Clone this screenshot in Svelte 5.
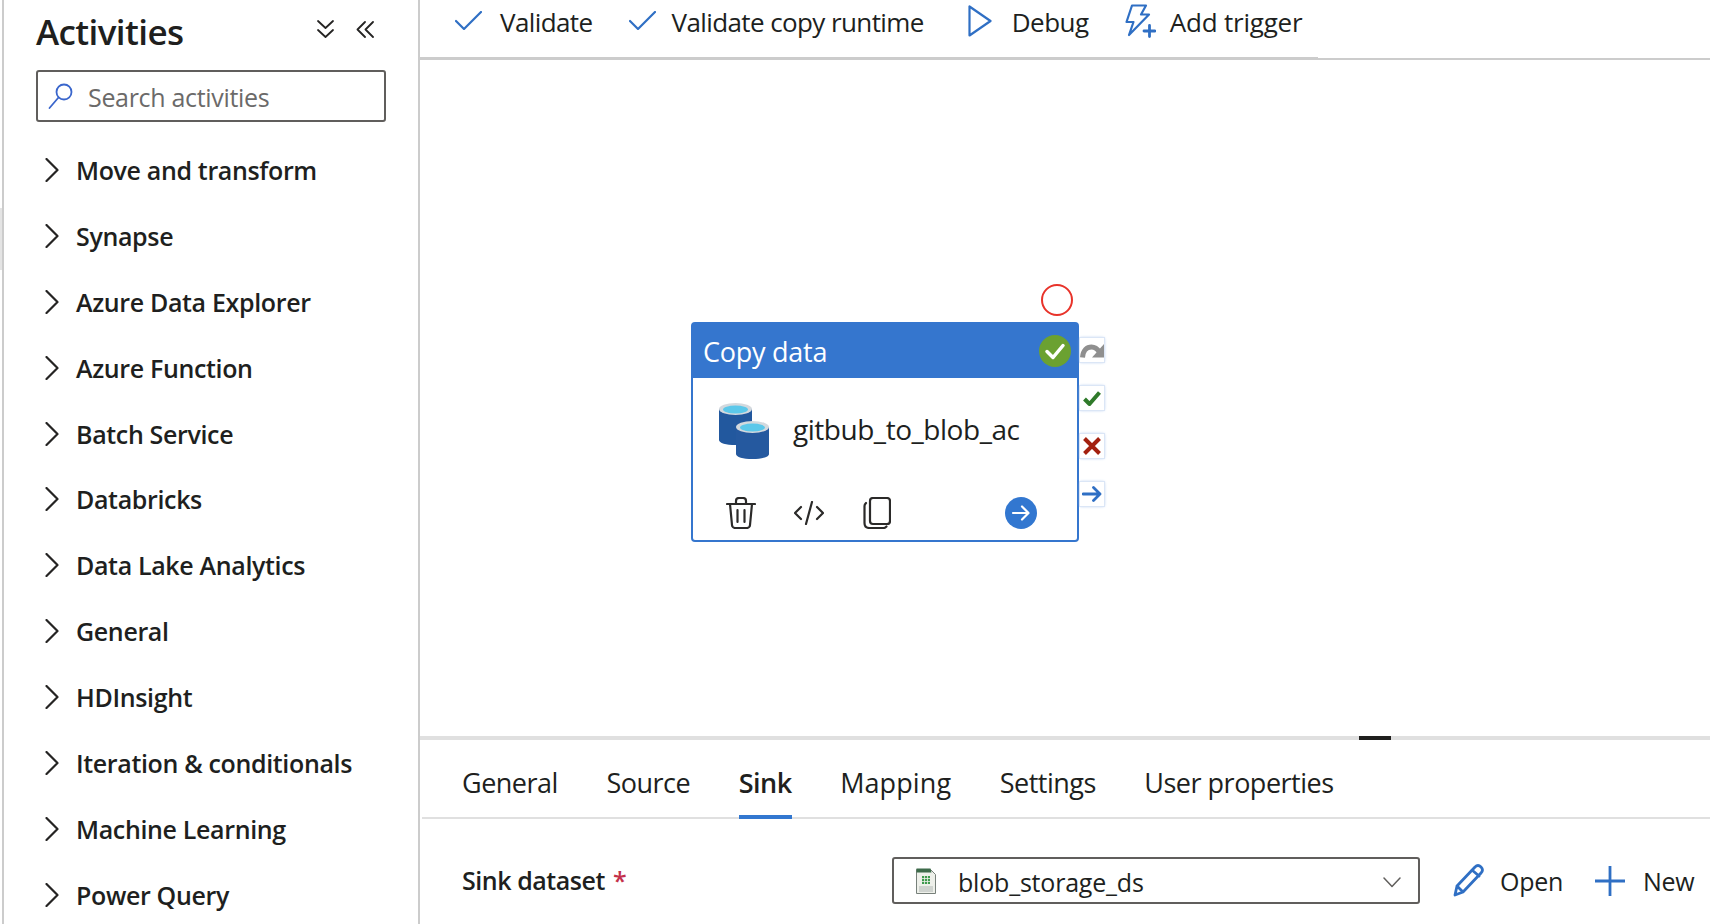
<script>
  const groups = ['Move and transform','Synapse','Azure Data Explorer','Azure Function','Batch Service','Databricks','Data Lake Analytics','General','HDInsight','Iteration & conditionals','Machine Learning','Power Query'];
  const tabs = ['General','Source','Sink','Mapping','Settings','User properties'];
</script>

<div class="page">
  <div class="gutter"><div class="gutter-mark"></div></div>
  <aside class="sidebar">
    <div class="side-head">
      <h1>Activities</h1>
      <div class="head-icons">
        <svg width="17" height="18" viewBox="0 0 17 18"><path d="M1 1l7.500 7 7.500-7M1 10l7.500 7 7.500-7" class="ln dark"/></svg>
        <svg width="18" height="17" viewBox="0 0 18 17"><path d="M9 1L1.500 8.500 9 16M17 1L9.500 8.500 17 16" class="ln dark"/></svg>
      </div>
    </div>
    <div class="search">
      <svg width="26" height="27" viewBox="0 0 26 27"><circle cx="16" cy="9" r="7.500" class="ln blue"/><path d="M10.500 14.500L1.500 25" class="ln blue"/></svg>
      <span>Search activities</span>
    </div>
    <ul class="groups">
      {#each groups as g}
        <li>
          <svg width="14" height="24" viewBox="0 0 14 24"><path d="M1.500 1l11 11-11 11" class="ln dark w2"/></svg>
          <span>{g}</span>
        </li>
      {/each}
    </ul>
  </aside>
  <main class="main">
    <div class="toolbar">
      <div class="tools">
        <div class="tool t1">
          <svg class="chk" width="27" height="19" viewBox="0 0 27 19"><path d="M1 10l8 8L26 1" class="ln blue2 w2"/></svg>
          <span>Validate</span>
        </div>
        <div class="tool t2">
          <svg class="chk" width="27" height="19" viewBox="0 0 27 19"><path d="M1 10l8 8L26 1" class="ln blue2 w2"/></svg>
          <span>Validate copy runtime</span>
        </div>
        <div class="tool t3">
          <svg class="play" width="24" height="32" viewBox="0 0 24 32"><path d="M1.500 1.500v29L22.500 16z" class="ln blue2 w2"/></svg>
          <span>Debug</span>
        </div>
        <div class="tool t4">
          <svg class="bolt" width="31" height="34" viewBox="0 0 31 34"><path d="M7 1.500h14L16 10.500h8L4 31l4.500-13H1.500z" class="ln blue2 w2"/><path d="M19 27h11M24.500 21.500v11" class="ln blue2 w25"/></svg>
          <span>Add trigger</span>
        </div>
      </div>
    </div>
    <section class="canvas">
      <div class="ring"></div>
      <div class="node">
        <div class="node-head">
          <span>Copy data</span>
          <svg width="32" height="32" viewBox="0 0 32 32"><circle cx="16" cy="16" r="16" fill="#6ba131"/><path d="M8 16.500l6 6 10-12" class="ln white w3"/></svg>
        </div>
        <div class="node-body">
          <svg width="51" height="56" viewBox="0 0 51 56">
            <path d="M0 6v31c0 3 7 5 16.500 5S33 40 33 37V6z" fill="#22589e"/>
            <ellipse cx="16.500" cy="6" rx="16.500" ry="6" fill="#d3d9de"/>
            <ellipse cx="16.500" cy="6.500" rx="12.500" ry="4" fill="#5cc8ea"/>
            <path d="M17 24v27c0 3 7 5 16.500 5S50 54 50 51V24z" fill="#25599f"/>
            <ellipse cx="33.500" cy="24" rx="16.500" ry="6" fill="#d3d9de"/>
            <ellipse cx="33.500" cy="24.500" rx="12.500" ry="4" fill="#5cc8ea"/>
          </svg>
          <span>gitbub_to_blob_ac</span>
        </div>
        <div class="node-foot">
          <svg class="trash" width="30" height="32" viewBox="0 0 30 32"><path d="M1 7h28M10 7V4c0-2 1-3 3-3h4c2 0 3 1 3 3v3M4 7l2 21c0 2 2 3 3 3h12c1 0 3-1 3-3l2-21M11.500 13v12M18.500 13v12" class="ln dark2 w2"/></svg>
          <svg class="code" width="30" height="24" viewBox="0 0 30 24"><path d="M7 6L1 12l6 6M23 6l6 6-6 6M18 1l-6 22" class="ln dark2 w2"/></svg>
          <svg class="dup" width="28" height="32" viewBox="0 0 28 32"><rect x="7" y="1" width="20" height="26" rx="3" class="ln dark2 w2"/><path d="M3 6C2 7 1.500 8 1.500 9v17c0 3 2 5 5 5h14c1 0 2-.5 3-1.500" class="ln dark2 w2"/></svg>
          <svg class="go" width="32" height="32" viewBox="0 0 32 32"><circle cx="16" cy="16" r="16" fill="#3277d0"/><path d="M8 16h15M17 9.500l6.500 6.500-6.500 6.500" class="ln white w2"/></svg>
        </div>
        <div class="ports">
          <div class="port"><svg width="24" height="16" viewBox="0 0 24 16"><path d="M2.500 15.500C3 8 7 5 11.500 5c3.500 0 6 2 8 5" class="ln gray w5"/><path d="M24 2v13.500H12z" fill="#8f8f8f"/></svg></div>
          <div class="port"><svg width="18" height="15" viewBox="0 0 18 15"><path d="M1.500 8l5 5L16.500 1.500" class="ln green w4"/></svg></div>
          <div class="port"><svg width="18" height="18" viewBox="0 0 18 18"><path d="M1.500 1.500l15 15M16.500 1.500l-15 15" class="ln red w4"/></svg></div>
          <div class="port"><svg width="20" height="16" viewBox="0 0 20 16"><path d="M1 8h17M11.500 1.500L18 8l-6.500 6.500" class="ln blue2 w25"/></svg></div>
        </div>
      </div>
    </section>
    <section class="panel">
      <div class="grabber"></div>
      <div class="tabs">
        {#each tabs as t}
          <div class="tab" class:active={t === 'Sink'}>{t}</div>
        {/each}
      </div>
      <div class="form">
        <label class="form-label" for="sink">Sink dataset <em>*</em></label>
        <div class="select" id="sink">
          <svg width="20" height="26" viewBox="0 0 20 26">
            <path d="M.5 1.500h14l5 5v19H.5z" fill="#eef0ea" stroke="#77807a"/>
            <path d="M.5 .5h14l1 4H.5z" fill="#3d6b4a"/>
            <path d="M6 8h8v8H6z" fill="#3e9a4d"/>
            <path d="M8.500 8v8M11.500 8v8M6 10.500h8M6 13.500h8" stroke="#eef0ea" stroke-width=".8"/>
            <rect x="3" y="18" width="14" height="6" fill="#cfd3cf"/>
          </svg>
          <span>blob_storage_ds</span>
          <svg class="caret" width="18" height="11" viewBox="0 0 18 11"><path d="M1 1l8 8.500L17 1" class="ln mid w15"/></svg>
        </div>
        <div class="action open">
          <svg width="32" height="33" viewBox="0 0 32 33"><path d="M2 31l2-9L22 3c2-2 4-2 6 0s2 4 0 6L10 28zM4 22l6 6M19 6l7 6" class="ln blue2 w25"/></svg>
          <span>Open</span>
        </div>
        <div class="action new">
          <svg width="30" height="30" viewBox="0 0 30 30"><path d="M0 15h30M15 0v30" class="ln blue2 w25"/></svg>
          <span>New</span>
        </div>
      </div>
    </section>
  </main>
</div>

<style>
  :global(html) { overflow: hidden; }
  :global(body) { margin: 0; background: #fff; }
  .page {
    display: grid;
    grid-template-columns: 4px 416px 1fr;
    height: 924px;
    width: 1710px;
    overflow: hidden;
    font-family: "Open Sans", "Noto Sans", sans-serif;
    color: #201f1e;
  }
  .ln { fill: none; stroke-width: 1.8; stroke-linecap: round; stroke-linejoin: round; }
  .dark { stroke: #252423; }
  .dark2 { stroke: #2b2a29; }
  .blue { stroke: #3a66cc; }
  .blue2 { stroke: #2f6fc4; }
  .white { stroke: #fff; }
  .gray { stroke: #8f8f8f; stroke-linecap: butt; }
  .green { stroke: #2f7a2a; stroke-linecap: butt; }
  .red { stroke: #a3200f; stroke-linecap: butt; }
  .mid { stroke: #605e5c; }
  .w15 { stroke-width: 1.500; }
  .w2 { stroke-width: 2.200; }
  .w25 { stroke-width: 2.800; }
  .w3 { stroke-width: 3.500; }
  .w4 { stroke-width: 4; }
  .w5 { stroke-width: 5; }

  .gutter { border-right: 2px solid #ccc; box-sizing: border-box; padding-top: 208px; }
  .gutter-mark { height: 62px; background: #e4e4e4; }

  .sidebar { border-right: 2px solid #ccc; box-sizing: border-box; padding: 0 32px; }
  .side-head { display: flex; justify-content: space-between; align-items: center; height: 62px; padding-right: 12px; }
  h1 { margin: 0; font-size: 35px; font-weight: 600; letter-spacing: -.6px; }
  .head-icons { display: flex; gap: 22px; align-items: center; margin-top: -4px; }
  .search { height: 52px; margin-top: 8px; box-sizing: border-box; border: 2px solid #605e5c; border-radius: 3px; display: flex; align-items: center; gap: 14px; padding: 2px 0 0 10px; color: #6b6a69; font-size: 25px; letter-spacing: -.32px; }
  .search svg { margin-top: -2px; }
  .groups { list-style: none; margin: 15px 0 0; padding: 0 0 0 9px; }
  .groups li { height: 65.9px; display: flex; align-items: center; gap: 17px; font-size: 25px; font-weight: 600; letter-spacing: -.35px; white-space: nowrap; }

  .main { display: flex; flex-direction: column; min-width: 0; }
  .toolbar { height: 60px; flex: none; box-sizing: border-box; border-bottom: 2px solid #ccc; }
  .tools { width: 898px; height: 60px; box-sizing: border-box; border-bottom: 3px solid #ccc; display: flex; padding-left: 35px; font-size: 26px; letter-spacing: -.6px; }
  .tool { display: flex; align-items: center; gap: 18px; height: 44px; white-space: nowrap; }
  .chk { margin-top: -3px; }
  .play { margin-top: -2px; }
  .bolt { margin-top: -2px; }
  .t2 { margin-left: 36px; gap: 16px; letter-spacing: -.6px; }
  .t3 { margin-left: 44px; gap: 20px; letter-spacing: -.5px; }
  .t4 { margin-left: 36px; gap: 14px; letter-spacing: -.2px; }

  .canvas { height: 676px; flex: none; position: relative; }
  .ring { position: absolute; left: 621px; top: 224px; width: 32px; height: 32px; box-sizing: border-box; border: 2px solid #e8332a; border-radius: 50%; }
  .node { position: absolute; left: 271px; top: 262px; width: 388px; height: 220px; box-sizing: border-box; border: 2px solid #3576ce; border-radius: 4px; background: #fff; display: flex; flex-direction: column; }
  .node-head { height: 54px; flex: none; background: #3576ce; color: #fff; display: flex; justify-content: space-between; align-items: center; padding: 0 6px 0 10px; font-size: 27px; letter-spacing: -.25px; }
  .node-body { display: flex; align-items: center; gap: 23px; padding: 24px 0 0 26px; font-size: 28px; letter-spacing: -.47px; height: 58px; }
  .node-body span { margin-top: -5px; }
  .node-foot { display: flex; align-items: center; padding: 37px 0 0 33px; }
  .code { margin-left: 38px; }
  .dup { margin-left: 39px; }
  .go { margin-left: 114px; }
  .ports { position: absolute; left: 387px; top: 14px; display: flex; flex-direction: column; gap: 24px; }
  .port { width: 24px; height: 24px; background: #fff; box-shadow: 0 0 0 1px #dbe6f6, 0 0 3px #8fb2e6; display: flex; align-items: center; justify-content: center; }

  .panel { flex: 1; position: relative; border-top: 4px solid #e0e0e0; }
  .grabber { position: absolute; left: 939px; top: -4px; width: 32px; height: 4px; background: #201f1e; }
  .tabs { margin-left: 2px; height: 79px; box-sizing: border-box; border-bottom: 2px solid #e0e0e0; display: flex; gap: 48.5px; padding-left: 40px; font-size: 27px; letter-spacing: -.5px; }
  .tab { height: 79px; box-sizing: border-box; padding-top: 24px; white-space: nowrap; }
  .tab:nth-child(4) { letter-spacing: .1px; }
  .tab.active { font-weight: 600; border-bottom: 4px solid #3277d0; }
  .form { display: flex; align-items: center; padding: 38px 0 0 42px; }
  .form-label { width: 430px; font-size: 25px; font-weight: 600; letter-spacing: -.45px; margin-top: -2px; }
  .form-label em { color: #c4314b; font-style: normal; margin-left: 2px; }
  .select { width: 528px; height: 47px; box-sizing: border-box; border: 2px solid #605e5c; border-radius: 3px; display: flex; align-items: center; gap: 22px; padding: 0 17px 0 22px; font-size: 25px; letter-spacing: -.2px; }
  .select span { margin-top: 2px; }
  .select .caret { margin-left: auto; margin-top: 4px; }
  .action { display: flex; align-items: center; gap: 15px; font-size: 25px; letter-spacing: -.3px; }
  .open { margin-left: 33px; }
  .new { margin-left: 32px; gap: 18px; }
</style>
